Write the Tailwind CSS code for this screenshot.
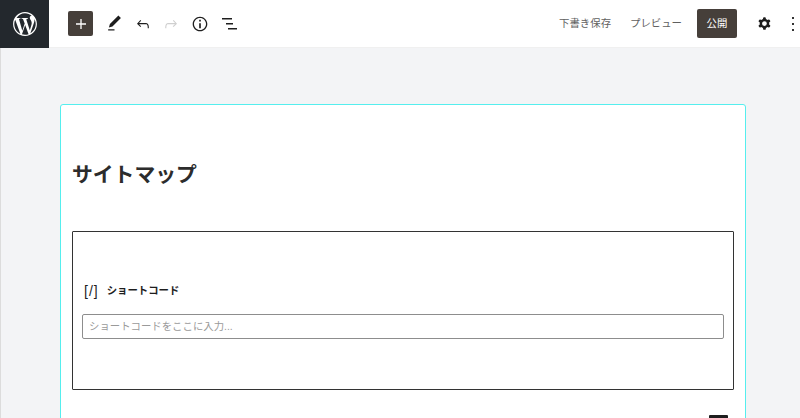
<!DOCTYPE html>
<html lang="ja">
<head>
    <meta charset="UTF-8">
    <meta name="viewport" content="width=device-width, initial-scale=1.0">
    <title>サイトマップ</title>
    <script src="https://cdn.jsdelivr.net/npm/@tailwindcss/browser@4"></script>
</head>
<body class="bg-[#f3f4f6] h-[418px] overflow-hidden font-['Liberation_Sans','Noto_Sans_CJK_JP',sans-serif]">

    <header class="h-12 bg-white flex items-center border-b border-[#f0f0f0]">
        <div class="w-[49px] h-12 bg-[#23282d] flex items-center justify-center shrink-0">
            <svg width="26" height="26" viewBox="0 0 24 24" fill="#fff"><path d="M12 1C5.93 1 1 5.93 1 12s4.93 11 11 11 11-4.93 11-11S18.07 1 12 1zM2.1 12c0-1.43.31-2.8.86-4.03l4.72 12.94C4.38 19.31 2.1 15.92 2.1 12zm9.9 9.9c-.97 0-1.91-.14-2.8-.4l2.97-8.63 3.04 8.34c.02.05.05.09.07.14-1.03.36-2.13.55-3.28.55zm1.36-14.54c.6-.03 1.13-.1 1.13-.1.53-.06.47-.85-.07-.82 0 0-1.6.13-2.64.13-.97 0-2.61-.13-2.61-.13-.53-.03-.6.79-.06.82 0 0 .5.07 1.04.1l1.55 4.24-2.17 6.52L6.42 7.36c.6-.03 1.14-.1 1.14-.1.53-.06.47-.85-.07-.82 0 0-1.6.13-2.64.13-.19 0-.41 0-.64-.01C5.98 3.67 8.8 2.1 12 2.1c2.38 0 4.55.91 6.18 2.4-.04 0-.08-.01-.12-.01-.97 0-1.66.85-1.66 1.76 0 .82.47 1.5.97 2.32.38.66.82 1.5.82 2.72 0 .85-.33 1.83-.76 3.2l-.99 3.32-3.08-9.45zm3.6 13.21l3.02-8.73c.57-1.41.75-2.54.75-3.54 0-.36-.02-.7-.07-1.01.78 1.42 1.22 3.05 1.22 4.79 0 3.65-1.98 6.84-4.92 8.49z"/></svg>
        </div>
        <div class="flex items-center ml-[19px]">
            <button class="w-[25px] h-[25px] bg-[#463f3a] rounded-[2px] flex items-center justify-center">
                <svg width="20" height="20" viewBox="0 0 24 24" fill="#fff"><path d="M18 11.2h-5.2V6h-1.6v5.2H6v1.6h5.2V18h1.6v-5.2H18z"/></svg>
            </button>
            <svg class="ml-[12px]" width="19" height="19" viewBox="0 0 24 24" fill="#1e1e1e"><path d="M20.1 5.1L16.9 2 6.2 12.7l-1.3 4.4 4.5-1.3L20.1 5.1zM4 20.8h8v-1.5H4v1.5z"/></svg>
            <svg class="ml-[10px]" width="18" height="18" viewBox="0 0 24 24" fill="#1e1e1e"><path d="M18.3 11.7c-.6-.6-1.4-.9-2.3-.9H6.7l2.9-3.3-1.1-1-4.5 5L8.5 16l1-1-2.7-2.7H16c.5 0 .9.2 1.3.5 1 1 1 3.4 1 4.5v.3h1.5v-.2c0-1.5 0-4.3-1.5-5.7z"/></svg>
            <svg class="ml-[10px]" width="18" height="18" viewBox="0 0 24 24" fill="#cfcfcf"><path d="M15.6 6.5l-1.1 1 2.9 3.3H8c-.9 0-1.7.3-2.3.9-1.4 1.5-1.4 4.2-1.4 5.6v.2h1.5v-.3c0-1.1 0-3.5 1-4.5.3-.3.7-.5 1.3-.5h9.2L14.3 15l1.1 1.1 4.6-4.6-4.4-5z"/></svg>
            <svg class="ml-[10px]" width="20" height="20" viewBox="0 0 24 24" fill="#1e1e1e"><path d="M12 3.2c-4.8 0-8.8 3.9-8.8 8.8 0 4.8 3.9 8.8 8.8 8.8 4.8 0 8.8-3.9 8.8-8.8 0-4.8-4-8.8-8.8-8.8zm0 16c-4 0-7.2-3.3-7.2-7.2C4.8 8 8 4.8 12 4.8s7.2 3.3 7.2 7.2c0 4-3.2 7.2-7.2 7.2zM11 17h2v-6h-2v6zm0-8h2V7h-2v2z"/></svg>
            <svg class="ml-[12px]" width="15" height="14" viewBox="0 0 15 14" fill="#1e1e1e"><rect x="0" y="1" width="10" height="1.5"/><rect x="4" y="6" width="7" height="1.5"/><rect x="6" y="11" width="9" height="1.5"/></svg>
        </div>
        <div class="ml-auto flex items-center">
            <span class="text-[10.4px] text-[#5f5f5f] mr-[19px]">下書き保存</span>
            <span class="text-[10.4px] text-[#5f5f5f] mr-[15px]">プレビュー</span>
            <button class="w-[40px] h-[29px] bg-[#463f3a] rounded-[2px] text-white text-[10.4px]">公開</button>
            <svg class="ml-[18px]" width="19" height="19" viewBox="0 0 24 24" fill="#1e1e1e"><path fill-rule="evenodd" d="M10.289 4.836A1 1 0 0111.275 4h1.306a1 1 0 01.987.836l.244 1.466c.787.26 1.503.679 2.108 1.218l1.393-.522a1 1 0 011.216.437l.653 1.13a1 1 0 01-.23 1.273l-1.148.944a6.025 6.025 0 010 2.435l1.149.946a1 1 0 01.23 1.272l-.653 1.13a1 1 0 01-1.216.437l-1.394-.522c-.605.54-1.32.958-2.108 1.218l-.244 1.466a1 1 0 01-.987.836h-1.306a1 1 0 01-.986-.836l-.244-1.466a5.995 5.995 0 01-2.108-1.218l-1.394.522a1 1 0 01-1.217-.436l-.653-1.131a1 1 0 01.23-1.272l1.149-.946a6.026 6.026 0 010-2.435l-1.148-.944a1 1 0 01-.23-1.272l.653-1.131a1 1 0 011.217-.437l1.393.522a5.994 5.994 0 012.108-1.218l.244-1.466zM14.929 12a3 3 0 11-6 0 3 3 0 016 0z"/></svg>
            <svg class="ml-[12px] mr-[1px]" width="13" height="24" viewBox="0 0 13 24" fill="#333"><rect x="6" y="5" width="2" height="2"/><rect x="6" y="11" width="2" height="2"/><rect x="6" y="17" width="2" height="2"/></svg>
        </div>
    </header>

    <main class="h-[370px] overflow-hidden pt-[56px] pl-[60px] border-l border-[#dcdcdc]">
        <div class="w-[686px] -ml-[1px] h-[330px] bg-white border border-[#55eeee] rounded-[3px] px-[11px] pt-[56px]">
            <h1 class="text-[20.8px] leading-[28px] font-bold text-[#2c2c2c]">サイトマップ</h1>
            <section class="mt-[42px] h-[159px] border border-[#333] rounded-[1px] px-[9px] pt-[51px]">
                <div class="flex items-center h-[16px] text-[#1e1e1e]">
                    <span class="text-[14px] tracking-[1px] ml-[2px]">[/]</span>
                    <span class="text-[10.4px] font-bold ml-[8px]">ショートコード</span>
                </div>
                <div class="mt-[15px] h-[25px] border border-[#8d8d8d] rounded-[2px] flex items-center px-[6px] text-[10.4px] text-[#9a9a9a]">ショートコードをここに入力...</div>
            </section>
            <div class="flex justify-end mt-[25px] pr-[6px]">
                <div class="w-[19px] h-[10px] bg-[#1e1e1e] rounded-[1px]"></div>
            </div>
        </div>
    </main>

</body>
</html>
